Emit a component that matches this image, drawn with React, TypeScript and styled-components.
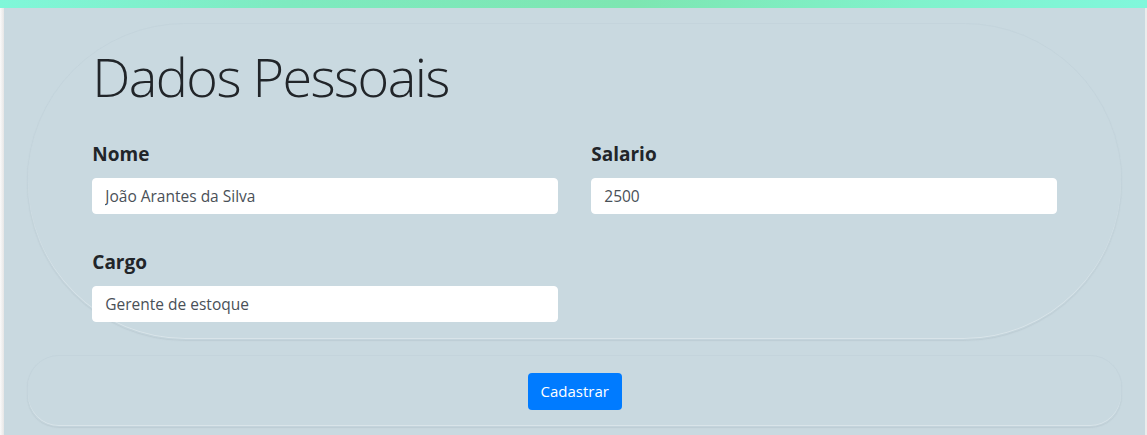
import React from "react";
import styled, { createGlobalStyle } from "styled-components";

const GlobalStyle = createGlobalStyle`
  html, body { margin: 0; padding: 0; }
  body {
    font-family: "Open Sans", "Noto Sans", "Liberation Sans", sans-serif;
    background: #c9d9e0;
    color: #212529;
  }
  * { box-sizing: border-box; }
`;

const TopBar = styled.div`
  height: 8px;
  background: linear-gradient(90deg, #80f7d9 0%, #7eeac0 25%, #7de6b1 55%, #80f2cc 80%, #80f7db 100%);
`;

const Shell = styled.div`
  display: flex;
  height: 427px;
`;

const LeftEdge = styled.div`
  width: 5px;
  background: linear-gradient(90deg, #fafafa, #e6e6e6);
`;

const RightEdge = styled.div`
  width: 2px;
  background: #ececec;
`;

const Main = styled.main`
  flex: 1;
  background: #c9d9e0;
  padding: 15px 23px 0 23px;
  display: flex;
  flex-direction: column;
  gap: 15px;
`;

const FormCard = styled.section`
  height: 317px;
  border-radius: 160px;
  border: 1px solid rgba(185, 203, 211, 0.35);
  box-shadow: 0 1px 1px rgba(150, 165, 175, 0.22), inset 0 -1px 0 rgba(255, 255, 255, 0.3);
  padding: 20px 64px 0 64px;
`;

const Title = styled.h1`
  margin: 0 0 33px 0;
  font-family: "Open Sans", "Noto Sans", sans-serif;
  font-weight: 300;
  font-size: 54px;
  line-height: 1.2;
  color: #212529;
  letter-spacing: -1.6px;
`;

const FieldGrid = styled.div`
  display: grid;
  grid-template-columns: 466px 466px;
  column-gap: 33px;
  row-gap: 36px;
`;

const Field = styled.div`
  display: flex;
  flex-direction: column;
`;

const Label = styled.label`
  font-family: "Open Sans", "Noto Sans", sans-serif;
  font-weight: 700;
  font-size: 19px;
  line-height: 24px;
  margin-bottom: 12px;
  color: #212529;
`;

const Input = styled.input`
  height: 36px;
  width: 100%;
  border: 1px solid #ffffff;
  border-radius: 4px;
  background: #ffffff;
  padding: 0 12px;
  font-family: "Open Sans", "Noto Sans", sans-serif;
  font-size: 15.5px;
  color: #495057;
  outline: none;
`;

const ActionCard = styled.section`
  height: 72px;
  border-radius: 32px;
  border: 1px solid rgba(185, 203, 211, 0.35);
  box-shadow: 0 1px 1px rgba(150, 165, 175, 0.22), inset 0 -1px 0 rgba(255, 255, 255, 0.3);
  display: flex;
  align-items: center;
  justify-content: center;
`;

const Button = styled.button`
  height: 37px;
  width: 94px;
  border: none;
  border-radius: 4px;
  background: #007bff;
  color: #ffffff;
  font-family: "Open Sans", "Noto Sans", sans-serif;
  font-size: 15px;
  cursor: pointer;
`;

export default function App() {
  return (
    <>
      <GlobalStyle />
      <TopBar />
      <Shell>
        <LeftEdge />
        <Main>
          <FormCard>
            <Title>Dados Pessoais</Title>
            <FieldGrid>
              <Field>
                <Label>Nome</Label>
                <Input defaultValue="João Arantes da Silva" />
              </Field>
              <Field>
                <Label>Salario</Label>
                <Input defaultValue="2500" />
              </Field>
              <Field>
                <Label>Cargo</Label>
                <Input defaultValue="Gerente de estoque" />
              </Field>
            </FieldGrid>
          </FormCard>
          <ActionCard>
            <Button>Cadastrar</Button>
          </ActionCard>
        </Main>
        <RightEdge />
      </Shell>
    </>
  );
}
